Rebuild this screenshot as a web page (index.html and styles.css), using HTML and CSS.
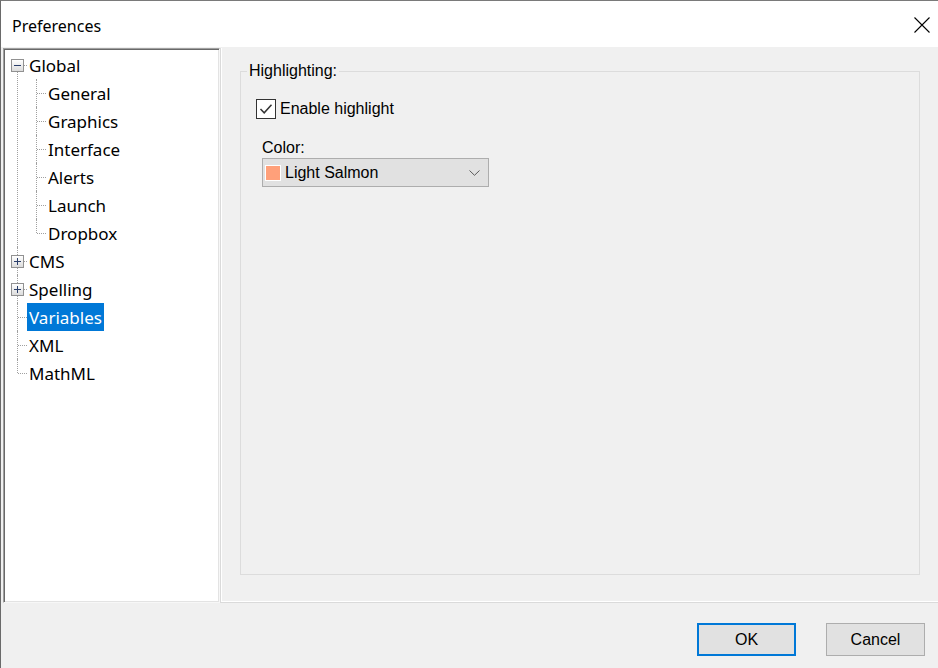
FILE: index.html
```html
<!DOCTYPE html>
<html>
<head>
<meta charset="utf-8">
<title>Preferences</title>
<link rel="stylesheet" href="styles.css">
</head>
<body>
<div class="window">
  <div class="titlebar">
    <span class="title">Preferences</span>
    <span class="close">
      <svg width="16" height="16" viewBox="0 0 16 16"><path d="M0.5 0.5 L15.5 15.5 M15.5 0.5 L0.5 15.5" stroke="#000" stroke-width="1.1" fill="none"/></svg>
    </span>
  </div>
  <div class="content">
    <div class="panels">
      <div class="tree">
        <ul class="level0">
          <li class="node">
            <div class="row"><span class="gutter"><span class="exp"><span class="minus"></span></span></span><span class="label">Global</span></div>
            <ul class="level1">
              <li><div class="row"><span class="gutter"></span><span class="label">General</span></div></li>
              <li><div class="row"><span class="gutter"></span><span class="label">Graphics</span></div></li>
              <li><div class="row"><span class="gutter"></span><span class="label">Interface</span></div></li>
              <li><div class="row"><span class="gutter"></span><span class="label">Alerts</span></div></li>
              <li><div class="row"><span class="gutter"></span><span class="label">Launch</span></div></li>
              <li><div class="row"><span class="gutter"></span><span class="label">Dropbox</span></div></li>
            </ul>
          </li>
          <li class="node"><div class="row"><span class="gutter"><span class="exp"><span class="minus"></span><span class="vbar"></span></span></span><span class="label">CMS</span></div></li>
          <li class="node"><div class="row"><span class="gutter"><span class="exp"><span class="minus"></span><span class="vbar"></span></span></span><span class="label">Spelling</span></div></li>
          <li class="node"><div class="row"><span class="gutter"></span><span class="label selected">Variables</span></div></li>
          <li class="node"><div class="row"><span class="gutter"></span><span class="label">XML</span></div></li>
          <li class="node"><div class="row"><span class="gutter"></span><span class="label">MathML</span></div></li>
        </ul>
      </div>
      <div class="pane">
        <fieldset class="group">
          <legend>Highlighting:</legend>
          <div class="check-row">
            <span class="checkbox">
              <svg width="18" height="18" viewBox="0 0 18 18"><path d="M3.5 9 L7.2 12.8 L14.5 4.8" stroke="#333" stroke-width="1.5" fill="none"/></svg>
            </span>
            <span class="check-label">Enable highlight</span>
          </div>
          <div class="field-label">Color:</div>
          <div class="combo">
            <span class="swatch"></span>
            <span class="combo-text">Light Salmon</span>
            <span class="chevron">
              <svg width="11" height="6" viewBox="0 0 11 6"><path d="M0.5 0.5 L5.5 5.3 L10.5 0.5" stroke="#5a5a5a" stroke-width="1" fill="none"/></svg>
            </span>
          </div>
        </fieldset>
      </div>
    </div>
    <div class="footer">
      <button class="btn btn-default">OK</button>
      <button class="btn">Cancel</button>
    </div>
  </div>
</div>
</body>
</html>
```

FILE: styles.css
```css
html, body {
  margin: 0;
  padding: 0;
  background: #f0f0f0;
  overflow: hidden;
}

.window {
  width: 938px;
  height: 668px;
  box-sizing: border-box;
  border-left: 1px solid #6a6a6a;
  border-top: 1px solid #7a7a7a;
  background: #f0f0f0;
  display: flex;
  flex-direction: column;
}

.titlebar {
  height: 46px;
  flex: none;
  background: #ffffff;
  display: flex;
  align-items: center;
  justify-content: space-between;
  padding: 3px 8px 0 11px;
  box-sizing: border-box;
}

.title {
  font-family: "Noto Sans", "Open Sans", sans-serif;
  font-size: 16px;
  color: #000;
}

.close {
  display: flex;
  width: 16px;
  height: 16px;
  margin-top: -2px;
}

.content {
  flex: 1;
  display: flex;
  flex-direction: column;
  padding-top: 1px;
}

.panels {
  display: flex;
  height: 555px;
  padding-left: 2px;
}

/* Tree */
.tree {
  width: 217px;
  height: 555px;
  box-sizing: border-box;
  background: #ffffff;
  border-style: solid;
  border-width: 1px;
  border-color: #a0a0a0 #f7f7f7 #f7f7f7 #a0a0a0;
  box-shadow: inset 1px 1px 0 #696969, inset -1px -1px 0 #e3e3e3;
  padding-top: 2px;
  font-family: "Noto Sans", "Open Sans", sans-serif;
  font-size: 17px;
  color: #000;
}

.tree ul {
  list-style: none;
  margin: 0;
  padding: 0;
}

.tree li {
  position: relative;
}

.level0 > li::before {
  content: "";
  position: absolute;
  left: 13px;
  top: 0;
  bottom: 0;
  border-left: 1px dotted #a0a0a0;
}

.level0 > li:first-child::before {
  top: 14px;
}

.level0 > li:last-child::before {
  bottom: auto;
  height: 14px;
}

.level1 > li::before {
  content: "";
  position: absolute;
  left: 32px;
  top: 0;
  bottom: 0;
  border-left: 1px dotted #a0a0a0;
}

.level1 > li:last-child::before {
  bottom: auto;
  height: 14px;
}

.row {
  position: relative;
  height: 28px;
  display: flex;
  align-items: center;
}

.row::before {
  content: "";
  position: absolute;
  left: 14px;
  width: 9px;
  top: 14px;
  border-top: 1px dotted #a0a0a0;
}

.level1 .row::before {
  left: 33px;
}

.gutter {
  width: 23px;
  height: 28px;
  flex: none;
  display: flex;
  align-items: center;
}

.level1 .gutter {
  width: 42px;
}

.exp {
  position: relative;
  z-index: 1;
  width: 11px;
  height: 11px;
  margin-left: 7px;
  margin-top: 1px;
  border: 1px solid #919191;
  background: linear-gradient(#ffffff, #dcdcdc);
}

.minus {
  position: absolute;
  left: 2px;
  top: 5px;
  width: 7px;
  height: 1px;
  background: #2b3f6b;
}

.vbar {
  position: absolute;
  left: 5px;
  top: 2px;
  width: 1px;
  height: 7px;
  background: #2b3f6b;
}

.label {
  padding: 1px 2px 0 2px;
  box-sizing: border-box;
  height: 28px;
  line-height: 27px;
  white-space: nowrap;
}

.label.selected {
  background: #0078d7;
  color: #ffffff;
}

/* Right pane */
.pane {
  flex: 1;
  height: 555px;
  box-sizing: border-box;
  border-left: 1px solid #dadada;
  border-bottom: 1px solid #dadada;
  box-shadow: inset 1px -1px 0 #ffffff;
  padding: 14px 0 0 19px;
  font-family: "Liberation Sans", Arial, sans-serif;
  font-size: 16px;
  color: #000;
}

.group {
  width: 680px;
  height: 513px;
  box-sizing: border-box;
  margin: 0;
  padding: 0 0 0 6px;
  border: 1px solid #dcdcdc;
  min-width: 0;
}

.group legend {
  padding: 0 2px;
  line-height: 18px;
}

.check-row {
  display: flex;
  align-items: center;
  margin-top: 19px;
  margin-left: 9px;
  height: 20px;
}

.checkbox {
  width: 20px;
  height: 20px;
  box-sizing: border-box;
  border: 1px solid #333333;
  background: #ffffff;
  display: flex;
  align-items: center;
  justify-content: center;
}

.check-label {
  margin-left: 4px;
  line-height: 18px;
}

.field-label {
  margin-left: 15px;
  margin-top: 20px;
  line-height: 18px;
}

.combo {
  margin-left: 15px;
  margin-top: 1px;
  width: 227px;
  height: 29px;
  box-sizing: border-box;
  border: 1px solid #adadad;
  background: #e1e1e1;
  display: flex;
  align-items: center;
  padding: 0 8px 0 2px;
}

.swatch {
  width: 16px;
  height: 16px;
  box-sizing: border-box;
  border: 1px solid #ffffff;
  background: #ffa07a;
  flex: none;
}

.combo-text {
  margin-left: 4px;
  flex: 1;
  line-height: 18px;
}

.chevron {
  display: flex;
  width: 11px;
  height: 6px;
}

/* Footer */
.footer {
  display: flex;
  justify-content: flex-end;
  gap: 30px;
  padding: 20px 13px 0 0;
}

.btn {
  width: 99px;
  height: 33px;
  box-sizing: border-box;
  margin: 0;
  padding: 0;
  background: #e1e1e1;
  border: 1px solid #adadad;
  font-family: "Liberation Sans", Arial, sans-serif;
  font-size: 16px;
  color: #000;
}

.btn-default {
  border: 2px solid #0078d7;
}
```
